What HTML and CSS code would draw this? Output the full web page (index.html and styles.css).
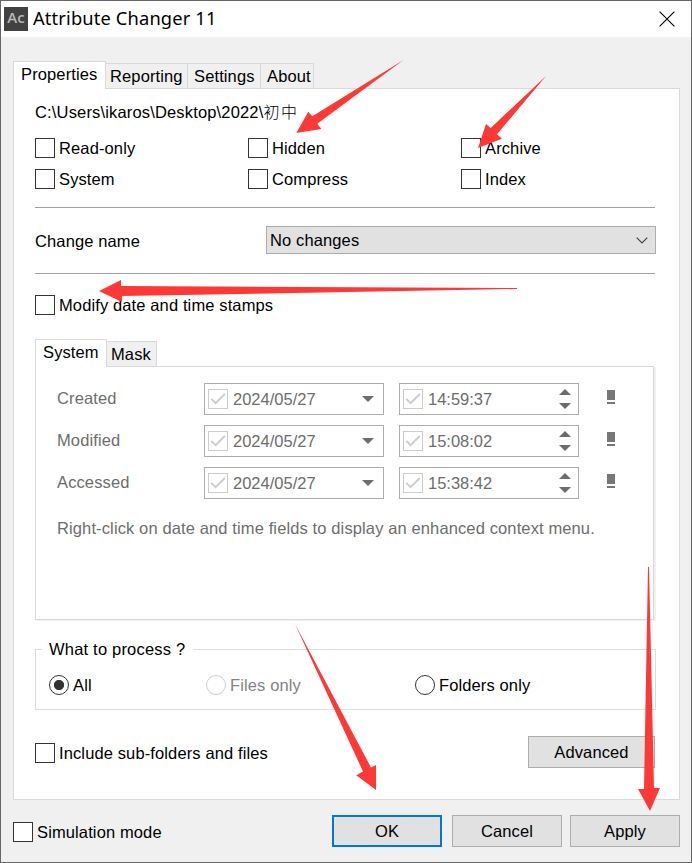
FILE: index.html
```html
<!DOCTYPE html>
<html lang="en">
<head>
<meta charset="utf-8">
<title>Attribute Changer 11</title>
<link rel="stylesheet" href="styles.css">
</head>
<body>
<svg width="0" height="0" class="defs">
  <symbol id="tick" viewBox="0 0 18 18"><path d="M2.3 8.8 6.6 13.2 15.8 4" fill="none" stroke="#ccc" stroke-width="1.8"/></symbol>
  <symbol id="down" viewBox="0 0 12 6"><path d="M0 0H12L6 6Z" fill="#6d6d6d"/></symbol>
  <symbol id="up" viewBox="0 0 12 6"><path d="M0 6H12L6 0Z" fill="#6d6d6d"/></symbol>
</svg>
<div class="window">
  <header class="titlebar">
    <span class="logo">Ac</span>
    <span class="title">Attribute Changer 11</span>
    <svg class="close" width="16" height="16" viewBox="0 0 16 16"><path d="M.6.6 15.4 15.4M15.4.6.6 15.4" stroke="#000" stroke-width="1.1"/></svg>
  </header>

  <main class="main">
    <nav class="tabs">
      <span class="tab active properties">Properties</span>
      <span class="tab reporting">Reporting</span>
      <span class="tab settings">Settings</span>
      <span class="tab about">About</span>
    </nav>
    <section class="panel">
      <div class="path">C:\Users\ikaros\Desktop\2022\<span class="cjk">初中</span></div>
      <div class="attributes">
        <label class="option"><i class="box"></i><span>Read-only</span></label>
        <label class="option"><i class="box"></i><span>Hidden</span></label>
        <label class="option"><i class="box"></i><span>Archive</span></label>
        <label class="option"><i class="box"></i><span>System</span></label>
        <label class="option"><i class="box"></i><span>Compress</span></label>
        <label class="option"><i class="box"></i><span>Index</span></label>
      </div>
      <div class="rename">
        <span class="rename-label">Change name</span>
        <div class="combo"><span>No changes</span><svg width="12" height="7" viewBox="0 0 12 7"><path d="M.7.7 6 6 11.3.7" fill="none" stroke="#444" stroke-width="1.2"/></svg></div>
      </div>
      <label class="option modify"><i class="box"></i><span>Modify date and time stamps</span></label>

      <nav class="tabs">
        <span class="tab active system">System</span>
        <span class="tab mask">Mask</span>
      </nav>
      <div class="stamps">
        <div class="stamp">
          <span class="stamp-name">Created</span>
          <div class="field"><i class="check"><svg><use href="#tick"/></svg></i><span class="date">2024/05/27</span><svg class="arrow"><use href="#down"/></svg></div>
          <div class="field"><i class="check"><svg><use href="#tick"/></svg></i><span class="time">14:59:37</span><span class="spin"><svg class="arrow"><use href="#up"/></svg><svg class="arrow"><use href="#down"/></svg></span></div>
          <i class="mark"></i>
        </div>
        <div class="stamp">
          <span class="stamp-name">Modified</span>
          <div class="field"><i class="check"><svg><use href="#tick"/></svg></i><span class="date">2024/05/27</span><svg class="arrow"><use href="#down"/></svg></div>
          <div class="field"><i class="check"><svg><use href="#tick"/></svg></i><span class="time">15:08:02</span><span class="spin"><svg class="arrow"><use href="#up"/></svg><svg class="arrow"><use href="#down"/></svg></span></div>
          <i class="mark"></i>
        </div>
        <div class="stamp">
          <span class="stamp-name">Accessed</span>
          <div class="field"><i class="check"><svg><use href="#tick"/></svg></i><span class="date">2024/05/27</span><svg class="arrow"><use href="#down"/></svg></div>
          <div class="field"><i class="check"><svg><use href="#tick"/></svg></i><span class="time">15:38:42</span><span class="spin"><svg class="arrow"><use href="#up"/></svg><svg class="arrow"><use href="#down"/></svg></span></div>
          <i class="mark"></i>
        </div>
        <p class="hint">Right-click on date and time fields to display an enhanced context menu.</p>
      </div>

      <fieldset class="process">
        <legend>What to process ?</legend>
        <div class="radios">
          <label class="option"><i class="radio on"></i><span>All</span></label>
          <label class="option disabled"><i class="radio"></i><span>Files only</span></label>
          <label class="option"><i class="radio"></i><span>Folders only</span></label>
        </div>
      </fieldset>

      <div class="last">
        <label class="option include"><i class="box"></i><span>Include sub-folders and files</span></label>
        <button class="button advanced">Advanced</button>
      </div>
    </section>
  </main>

  <footer class="footer">
    <label class="option simulation"><i class="box"></i><span>Simulation mode</span></label>
    <button class="button ok">OK</button>
    <button class="button cancel">Cancel</button>
    <button class="button">Apply</button>
  </footer>

  <svg class="pointers" width="692" height="863" viewBox="0 0 692 863" fill="#fc3937">
    <path d="M403.500 60 312.300 116.300 308.300 111.700 296.300 133 321.300 129 317.300 123.700Z"/>
    <path d="M546 76 490.700 128 486 124 478 148 502 138.700 497 134.300Z"/>
    <path d="M517 288 121 286V280L99 291 122 302V296L517 289Z"/>
    <path d="M295 624 363 771.500 356.300 775.300 376 790V765L371 767.500Z"/>
    <path d="M648 567 644 789H638L650 811 660 788H654L649 567Z"/>
  </svg>
</div>
</body>
</html>
```
FILE: styles.css
```css
* { box-sizing: border-box; }
body {
  margin: 0;
  font: 16.5px/20px "Liberation Sans", "Noto Sans CJK SC", sans-serif;
  letter-spacing: .12px;
  color: #000;
}
.defs { position: absolute; }
.window {
  position: relative;
  display: flex;
  flex-direction: column;
  width: 692px;
  height: 863px;
  border: 1px solid #666;
  background: #f0f0f0;
  overflow: hidden;
  white-space: nowrap;
}
.titlebar {
  display: flex;
  align-items: center;
  height: 36px;
  padding: 0 16px 0 3px;
  background: #fff;
}
.logo {
  width: 24px;
  height: 24px;
  margin-right: 5px;
  background: #414141;
  color: #b8b8b8;
  font: 600 15px/21px "Open Sans", sans-serif;
  letter-spacing: 0;
  text-align: center;
}
.title { padding-bottom: 2px; font: 18.3px/24px "Noto Sans", sans-serif; letter-spacing: .15px; }
.close { margin-left: auto; margin-bottom: 1px; }
.main { padding: 24px 11px 0 12px; }

.tabs { display: flex; align-items: flex-end; }
.tab {
  height: 25px;
  padding: 2px 0 0 4px;
  border: 1px solid #d9d9d9;
  border-width: 1px 1px 0 0;
  background: #f0f0f0;
}
.tab.active {
  position: relative;
  z-index: 1;
  height: 28px;
  margin-bottom: -1px;
  padding: 2px 0 0 7px;
  border-left-width: 1px;
  background: #fff;
}
.properties { width: 93px; }
.reporting { width: 82px; }
.tab.settings { width: 73px; padding-left: 6px; }
.tab.about { width: 53px; padding-left: 6px; }
.system { width: 72px; }
.mask { width: 50px; }

.panel {
  height: 712px;
  padding: 13px 23px 0 21px;
  border: 1px solid #d9d9d9;
  background: #fff;
}
.path { height: 20px; letter-spacing: .16px; }
.cjk { font-size: 16px; font-weight: 300; letter-spacing: 1.5px; }
.attributes {
  display: grid;
  grid-template-columns: repeat(3, 213px);
  row-gap: 11px;
  width: 620px;
  margin-top: 16px;
}
.option { display: flex; align-items: center; gap: 4px; height: 20px; }
.option span { margin-top: -1px; }
.box, .check, .radio {
  flex: none;
  width: 20px;
  height: 20px;
  border: 1px solid #333;
  background: #fff;
}
.rename {
  display: flex;
  align-items: flex-start;
  height: 67px;
  width: 620px;
  margin-top: 18px;
  padding-top: 18px;
  border: solid #a0a0a0;
  border-width: 1px 0;
}
.rename-label { flex: none; width: 231px; padding-top: 5px; }
.combo {
  display: flex;
  flex: none;
  align-items: center;
  justify-content: space-between;
  width: 390px;
  height: 28px;
  padding: 0 7px 0 3px;
  border: 1px solid #adadad;
  background: #e1e1e1;
}
.modify { margin: 21px 0 24px; }

.stamps {
  width: 619px;
  height: 254px;
  padding: 16px 0 0 21px;
  border: 1px solid #d9d9d9;
  box-shadow: 2px 1px #f0f0f0;
}
.stamp { display: flex; height: 32px; margin-bottom: 10px; color: #6d6d6d; }
.stamp-name { width: 147px; padding-top: 5px; }
.field {
  display: flex;
  align-items: center;
  width: 180px;
  margin-right: 15px;
  padding: 0 9px 0 3px;
  border: 1px solid #abadb3;
}
.check { border-color: #ccc; }
.check svg { display: block; width: 18px; height: 18px; }
.date, .time { margin: 0 auto 0 5px; letter-spacing: 0; }
.arrow { width: 12px; height: 6px; }
.spin { display: flex; flex-direction: column; gap: 8px; margin-right: -2px; }
.mark {
  width: 8px;
  height: 14px;
  margin: 7px 0 0 13px;
  border-bottom: 2px solid #777;
  background: linear-gradient(#777 10px, #fff 10px);
}
.hint { margin: 19px 0 0; color: #6d6d6d; }

.process {
  height: 71px;
  margin: 19px 0 0;
  padding: 0;
  border: 1px solid #dcdcdc;
}
.process legend { height: 20px; margin-left: 6px; padding: 0 8px 0 7px; letter-spacing: .2px; }
.radios { display: flex; padding: 16px 0 0 13px; }
.radios .option:nth-child(1) { width: 157px; }
.radios .option:nth-child(2) { width: 209px; }
.radio { border-radius: 50%; }
.radio.on { background: radial-gradient(circle, #333 4.700px, #fff 5.500px); }
.disabled { color: #838383; }
.disabled .radio { border-color: #ccc; }

.last {
  display: flex;
  align-items: center;
  justify-content: space-between;
  margin-top: 26px;
  padding-right: 1px;
}
.include, .simulation { margin-top: 2px; }
.button {
  width: 110px;
  height: 32px;
  padding: 0;
  border: 1px solid #adadad;
  background: #e1e1e1;
  color: #000;
  font: inherit;
  letter-spacing: inherit;
}
.advanced { width: 127px; }
.footer {
  display: flex;
  align-items: center;
  padding: 15px 11px 0 12px;
}
.simulation { margin-right: auto; }
.ok { border: 2px solid #0078d7; }
.cancel { margin: 0 8px 0 10px; }
.pointers { position: absolute; top: -1px; left: -1px; z-index: 2; }
```
